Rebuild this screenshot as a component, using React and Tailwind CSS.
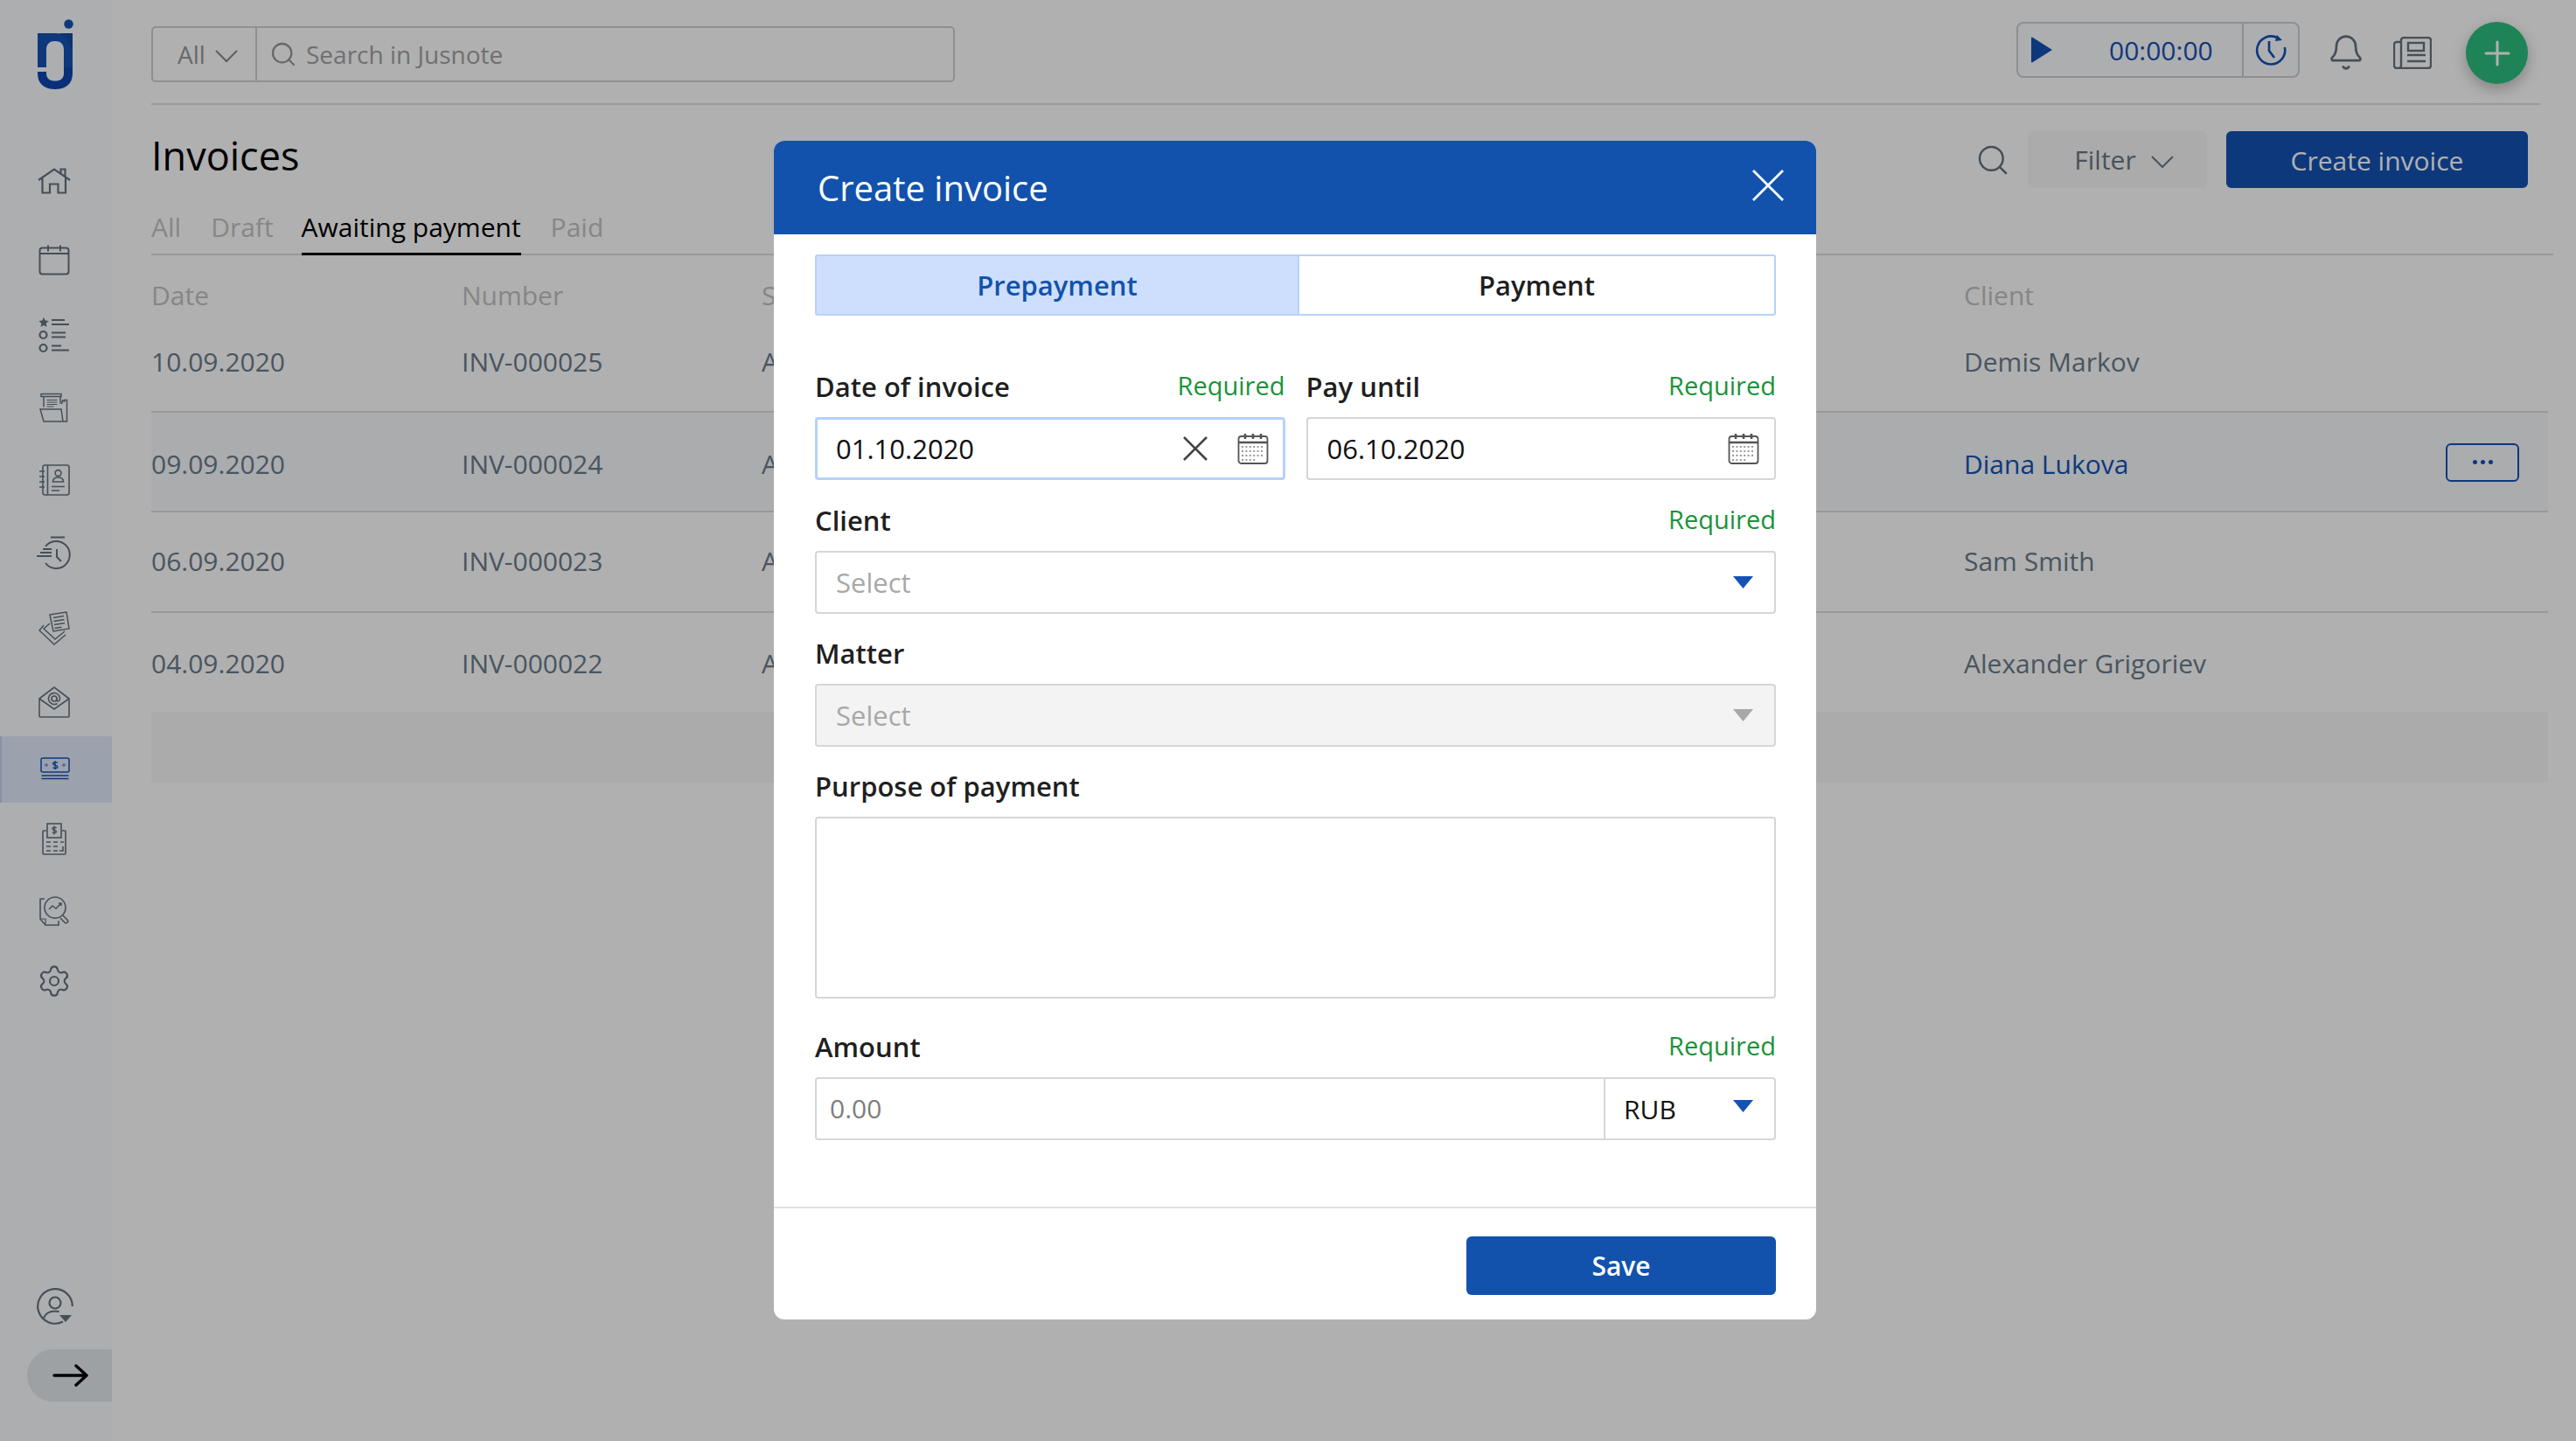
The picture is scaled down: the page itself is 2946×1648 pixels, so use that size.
import React from 'react';
import { Bell, Search, Settings } from 'lucide-react';

const line = '#66737f';

const Home = () => (
  <svg width="38" height="30" viewBox="0 0 38 30" fill="none" stroke={line} strokeWidth="2.2">
    <path d="M1 14 19 1.5 37 14M5.5 11v17.5H14V18.5h9.5v10H32V11M26.5 6.500V1.500h5v9" />
  </svg>
);
const CalendarNav = () => (
  <svg width="36" height="36" viewBox="0 0 36 36" fill="none" stroke={line} strokeWidth="2">
    <rect x="1.500" y="4.500" width="33" height="30" rx="3" />
    <path d="M1.500 11h33M11 1.500v7M25 1.500v7" />
  </svg>
);
const Tasks = () => (
  <svg width="36" height="42" viewBox="0 0 36 42" fill="none" stroke={line} strokeWidth="2.2">
    <path fill={line} stroke="none" d="m6 1 1.700 3.600 4 .5-3 2.700.8 4L6 10l-3.500 1.800.8-4-3-2.700 4-.5z" />
    <path d="M15 4h15M15 9h20" />
    <circle cx="5.500" cy="21" r="4" />
    <path d="M15 18.500h16M15 23.500h16" />
    <circle cx="5.500" cy="36" r="4" />
    <path d="M15 33.500h11M15 38.500h20" />
  </svg>
);
const Docs = () => (
  <svg width="34" height="34" viewBox="0 0 34 34" fill="none" stroke={line} strokeWidth="1.500">
    <path d="M2 1.500h23v3H2zM5 4.500v12M24 4.500v8M25.500 13l1-4 2 1V8.500h3V33H5L1 19h24l2 14" />
    <path d="M8.500 8.500h12M8.500 11h12M8.500 13.500h12M8.500 16h8" strokeWidth="1" />
  </svg>
);
const Contacts = () => (
  <svg width="36" height="36" viewBox="0 0 36 36" fill="none" stroke={line} strokeWidth="1.600">
    <rect x="5" y="1" width="30" height="34" rx="2.500" />
    <path d="M10.500 1v34M1 8h6M1 14h6M1 20h6M1 26h6" />
    <circle cx="22.500" cy="10" r="3.400" />
    <path d="M16.500 20c0-3.500 2.500-5 6-5s6 1.500 6 5zM15 25.500h15M15 30h9" />
  </svg>
);
const TimeFast = () => (
  <svg width="42" height="40" viewBox="0 0 42 40" fill="none" stroke={line} strokeWidth="2">
    <path d="M17 1.500h16M11 12a15.500 15.500 0 1 1 0 19M8 15h10M5 19h13M1 23h17M24 15v9l5 5" />
  </svg>
);
const Notes = () => (
  <svg width="36" height="40" viewBox="0 0 36 40" fill="none" stroke={line} strokeWidth="1.500">
    <path d="M13 4 32 1l3 19-18 3zM17 7.500l12-2M17.500 11.500l12-2M18 15.500l12-2M18.500 19.500l8-1.300" />
    <path d="M13 14 6 20l13 12 11-9M6 16 1 22l17 16 13-11" />
  </svg>
);
const Mail = () => (
  <svg width="36" height="36" viewBox="0 0 36 36" fill="none" stroke={line} strokeWidth="1.600">
    <path d="M1 14 18 1l17 13v20a1 1 0 0 1-1 1H2a1 1 0 0 1-1-1zM1 14l17 12 17-12" />
    <circle cx="18" cy="14" r="3" />
    <path d="M21 14v1.500c0 2.500 3.500 2 3.500-1.500a6.500 6.500 0 1 0-3 5.500" />
  </svg>
);
const Money = () => (
  <svg width="34" height="28" viewBox="0 0 34 28" fill="none" stroke="#1452b4" strokeWidth="1.500">
    <rect x="1" y="1" width="32" height="16" rx="2" />
    <path d="M1.500 21h31M1.500 24.500h31" />
    <path d="M7 7.500 8.500 9 7 10.500 5.500 9zM27 7.500 28.500 9 27 10.500 25.500 9z" strokeWidth="0.9" />
    <path d="M19.800 6.500c-.8-1.200-5.200-1.200-5.200.8 0 2.600 5.200 1.200 5.200 3.600 0 2-4.400 2-5.300.7M17 4.300v9.600" strokeWidth="1.400" />
  </svg>
);
const Receipt = () => (
  <svg width="28" height="37" viewBox="0 0 28 37" fill="none" stroke={line} strokeWidth="1.600">
    <path d="M5 9H2a1 1 0 0 0-1 1v25a1 1 0 0 0 1 1h24a1 1 0 0 0 1-1V10a1 1 0 0 0-1-1h-3" />
    <rect x="6" y="1" width="16" height="16" />
    <path d="M5 22h5M13 22h5M21 22h4M5 27h5M13 27h5M5 32h5M13 32h5M24 27v5h-4" />
    <path d="M16.500 6c-.8-1-4.500-1-4.500.8 0 2.200 4.500 1.200 4.500 3.200 0 1.800-4 1.800-4.500.7M14 3.500v10" strokeWidth="1.500" />
  </svg>
);
const Analysis = () => (
  <svg width="35" height="35" viewBox="0 0 35 35" fill="none" stroke={line} strokeWidth="1.600">
    <path d="M6 4H1v23l6 7h15v-5" />
    <path d="M1 27h6v7" strokeWidth="1.200" />
    <circle cx="18" cy="14" r="12" />
    <path d="m11 16 4-4 4 3 6-6M22 9h3v3" strokeWidth="1.500" />
    <path d="m27 23 5 5c2 2-1 5-3 3l-5-5" />
  </svg>
);
const Profile = () => (
  <svg width="42" height="42" viewBox="0 0 42 42" fill="none" stroke={line} strokeWidth="2.200">
    <path d="M30 38.500A19.800 19.800 0 1 1 40.800 21" />
    <circle cx="21" cy="17" r="6.500" />
    <path d="M8 34.500c2-5.500 7-8 13-8 1.500 0 3 .2 4.500.6" />
    <path fill={line} stroke="none" d="M26 31h14l-7 8z" />
  </svg>
);

const Logo = () => (
  <svg width="44" height="82" viewBox="41 22 44 82">
    <circle cx="78.500" cy="27.500" r="5.200" fill="#1452b4" />
    <path fill="#1452b4" d="M43 38h20c14 0 20 6 20 18v21H73V57c0-7-4-10-10-10s-10 3-10 10v20H43z" />
    <path fill="#124aa6" d="M68 38h15v22c-2-8-6-17-15-22z" />
    <path fill="#0f45b0" d="M43 82h10v2c0 6 4 8.500 10 8.500s10-2.500 10-8.500v-7h10v7c0 12-8 18-20 18s-20-6-20-18z" />
  </svg>
);

const Chevron = ({ color }) => (
  <svg width="26" height="15" viewBox="0 0 26 15" fill="none" stroke={color} strokeWidth="2"><path d="M1 1l12 12L25 1" /></svg>
);

// top margin gives each icon the spacing it has in the rail
const railItems = [
  { icon: <Home />, cls: 'mt-[0px]' },
  { icon: <CalendarNav />, cls: 'mt-[14px]' },
  { icon: <Tasks />, cls: 'mt-[10px]' },
  { icon: <Docs />, cls: 'mt-[7px]' },
  { icon: <Contacts />, cls: 'mt-[7px]' },
  { icon: <TimeFast />, cls: 'mt-[8px]' },
  { icon: <Notes />, cls: 'mt-[10px]' },
  { icon: <Mail />, cls: 'mt-[8px]' },
  { icon: <Money />, cls: 'mt-[1px] bg-[#e1e9fb] border-l-2 border-l-[#c3d3ee]' },
  { icon: <Receipt />, cls: 'mt-[3px]' },
  { icon: <Analysis />, cls: 'mt-[6px]' },
  { icon: <Settings size={40} strokeWidth={1.300} color={line} />, cls: 'mt-[5px]' },
];

const Sidebar = () => (
  <aside className="w-[128px] shrink-0 bg-[#fbfcff] flex flex-col">
    <div className="h-[169px] pt-[22px] pl-[41px]">
      <Logo />
    </div>
    {railItems.map((item, i) => (
      <div key={i} className={`h-[76px] flex items-center justify-center pr-[4px] ${item.cls}`}>
        {item.icon}
      </div>
    ))}
    <div className="mt-auto flex justify-center pr-[2px]">
      <Profile />
    </div>
    <div className="mt-[28px] mb-[45px] ml-[31px] h-[60px] rounded-l-full bg-[#e5e9ec] flex items-center pl-[29px]">
      <svg width="42" height="26" viewBox="0 0 42 26" fill="none" stroke="#000" strokeWidth="3.400" strokeLinecap="round" strokeLinejoin="round">
        <path d="M2 13h37M27 2l12 11-12 11" />
      </svg>
    </div>
  </aside>
);

const TopBar = () => (
  <header className="h-[120px] mr-[41px] border-b-2 border-[#dedede] flex items-start pr-[14px] pt-[25px]">
    <div className="mt-[5px] w-[919px] h-[64px] border-2 border-[#cfcfcf] rounded-[5px] flex items-center">
      <div className="w-[119px] h-full border-r-2 border-[#cfcfcf] flex items-center pl-[28px] text-[#999] text-[28px]">
        All
        <span className="ml-[11px] mt-[4px]"><Chevron color="#8a8a8a" /></span>
      </div>
      <Search size={32} strokeWidth={1.700} color="#999" className="ml-[14px]" />
      <span className="ml-[10px] text-[28px] text-[#a2a2a2]">Search in Jusnote</span>
    </div>
    <div className="ml-auto flex items-start">
      <div className="w-[324px] h-[64px] border-2 border-[#cfcfcf] rounded-[8px] bg-[#fbfcff] flex items-center">
        <svg width="26" height="30" viewBox="0 0 26 30" className="ml-[14px]"><path d="M1 1.500a1 1 0 0 1 1.500-.8L25 15 2.500 29.300A1 1 0 0 1 1 28.500z" fill="#1452b4" /></svg>
        <span className="ml-[64px] w-[152px] text-[30px] text-[#1452b4]">00:00:00</span>
        <div className="h-full w-[64px] border-l-2 border-[#cfcfcf] flex items-center justify-center">
          <svg width="36" height="36" viewBox="0 0 36 36" fill="none" stroke="#1452b4" strokeWidth="2.600">
            <path d="M26 4.500A16 16 0 1 0 33.800 15M16 8v11l6 8" />
            <path d="m25 1 6 6-8 1z" fill="#1452b4" stroke="none" />
          </svg>
        </div>
      </div>
      <Bell size={44} strokeWidth={1.500} color={line} className="ml-[31px] mt-[13px]" />
      <svg width="44" height="37" viewBox="0 0 44 37" fill="none" stroke={line} strokeWidth="2.400" className="ml-[32px] mt-[17px]">
        <path d="M9 6h-5a3 3 0 0 0-3 3v24a3 3 0 0 0 3 3h36a3 3 0 0 0 3-3V4a3 3 0 0 0-3-3H12a3 3 0 0 0-3 3v29a3 3 0 0 1-3 3" />
        <rect x="17" y="7" width="18" height="9" />
        <path d="M16 21h21M16 28h21" />
      </svg>
      <div className="ml-[39px] w-[71px] h-[71px] rounded-full bg-[#2dbe80] shadow-[0_6px_16px_rgba(0,0,0,0.25)] flex items-center justify-center">
        <svg width="30" height="30" viewBox="0 0 30 30" stroke="#fff" strokeWidth="3" strokeLinecap="round"><path d="M15 2v26M2 15h26" /></svg>
      </div>
    </div>
  </header>
);

const rows = [
  { date: '10.09.2020', num: 'INV-000025', client: 'Demis Markov', cls: 'h-[114px] pb-[2px]' },
  { date: '09.09.2020', num: 'INV-000024', client: 'Diana Lukova', cls: 'h-[114px] bg-[#f6f9fc] pt-[5px]', active: true },
  { date: '06.09.2020', num: 'INV-000023', client: 'Sam Smith', cls: 'h-[115px] pb-[2px]' },
  { date: '04.09.2020', num: 'INV-000022', client: 'Alexander Grigoriev', cls: 'h-[113px] pt-[4px] border-b-transparent' },
];

const Invoices = () => (
  <section>
    <div className="mr-[55px] flex items-center pt-[30px]">
      <h1 className="text-[45px] leading-[60px] font-medium text-black -mt-[10px]">Invoices</h1>
      <Search size={40} strokeWidth={1.500} color={line} className="ml-auto" />
      <button className="ml-[20px] pl-[15px] w-[205px] h-[65px] rounded-[6px] bg-[#f8f8f8] flex items-center justify-center text-[30px] text-[#6b7884]">
        Filter
        <span className="ml-[17px] mt-[5px]"><Chevron color="#6b7884" /></span>
      </button>
      <button className="ml-[22px] pt-[2px] w-[345px] h-[65px] rounded-[6px] bg-[#1452b4] text-[30px] text-white">Create invoice</button>
    </div>
    <div className="mr-[26px] h-[77px] border-b-2 border-[#dedede] flex items-end gap-[34px] text-[30px] text-[#c4c4c4]">
      <span className="h-[53px]">All</span>
      <span className="h-[53px]">Draft</span>
      <span className="h-[55px] -ml-[2px] -mb-[2px] border-b-[3px] border-black text-black">Awaiting payment</span>
      <span className="h-[53px]">Paid</span>
    </div>
    <div className="mr-[32px]">
      <div className="h-[66px] flex items-center pt-[25px] text-[30px] text-[#c2c2c2]">
        <span className="w-[355px]">Date</span>
        <span className="w-[343px]">Number</span>
        <span className="w-[1375px]">S</span>
        <span>Client</span>
      </div>
      {rows.map((r) => (
        <div key={r.num} className={`flex items-center border-b-2 border-[#dedede] text-[30px] text-[#6b7b8b] ${r.cls}`}>
          <span className="w-[355px]">{r.date}</span>
          <span className="w-[343px]">{r.num}</span>
          <span className="w-[1375px]">A</span>
          <span className={r.active ? 'text-[#1452b4]' : ''}>{r.client}</span>
          {r.active && (
            <span className="ml-auto mr-[33px] -mt-[4px] w-[84px] h-[44px] rounded-[6px] border-2 border-[#1452b4] flex items-center justify-center gap-[4px]">
              <i className="w-[5px] h-[5px] rounded-full bg-[#1452b4]" />
              <i className="w-[5px] h-[5px] rounded-full bg-[#1452b4]" />
              <i className="w-[5px] h-[5px] rounded-full bg-[#1452b4]" />
            </span>
          )}
        </div>
      ))}
      <div className="h-[81px] bg-[#f8f8f8]" />
    </div>
  </section>
);

const CalendarSmall = () => (
  <svg width="36" height="36" viewBox="0 0 36 36" fill="none" stroke="#555" strokeWidth="1.800">
    <rect x="1.500" y="4" width="33" height="31" rx="3" />
    <path d="M1.500 11h33" strokeWidth="2.600" />
    <path d="M9 1v6M18 1v6M27 1v6" strokeWidth="2.600" />
    <path d="M5 16h26M5 21h26M5 26h26M5 31h16" stroke="#999" strokeWidth="1.800" strokeDasharray="2 2.400" />
  </svg>
);

const Caret = ({ color = '#1452b4' }) => (
  <svg width="23" height="14" viewBox="0 0 23 14"><path d="M0 0h23L11.500 14z" fill={color} /></svg>
);

const Label = ({ text, required }) => (
  <div className="h-[40px] mb-[14px] flex items-center justify-between">
    <span className="text-[31px] font-semibold text-[#1f1f1f] -mt-[2px]">{text}</span>
    {required && <span className="text-[29px] text-[#1a9338] -mt-[5px]">Required</span>}
  </div>
);

const Modal = () => (
  <div className="absolute left-[885px] top-[161px] w-[1192px] rounded-[12px] bg-white overflow-hidden">
    <div className="h-[107px] bg-[#1252ac] flex items-center justify-between pl-[50px] pr-[36px]">
      <h2 className="text-[40px] font-medium text-white">Create invoice</h2>
      <svg width="38" height="38" viewBox="0 0 38 38" stroke="#fff" strokeWidth="2.800" className="-mt-[6px]"><path d="M2 2l34 34M36 2 2 36" /></svg>
    </div>
    <div className="pl-[47px] pr-[46px]">
      <div className="mt-[23px] h-[70px] flex border-2 border-[#b6d1fb] rounded-[3px] text-[31px] font-semibold">
        <div className="w-[550px] bg-[#cddffc] flex items-center justify-center text-[#1252ac]">Prepayment</div>
        <div className="flex-1 border-l-2 border-[#b6d1fb] flex items-center justify-center text-[#1f1f1f]">Payment</div>
      </div>

      <div className="mt-[62px] grid grid-cols-2 gap-[24px]">
        <div>
          <Label text="Date of invoice" required />
          <div className="h-[72px] border-[3px] border-[#b6d1fb] rounded-[4px] flex items-center pl-[21px] pr-[16px] text-[31px] text-[#111]">
            01.10.2020
            <svg width="30" height="28" viewBox="0 0 30 28" stroke="#444" strokeWidth="2.600" className="ml-auto mr-[33px]"><path d="M2 1l26 26M28 1 2 27" /></svg>
            <CalendarSmall />
          </div>
        </div>
        <div>
          <Label text="Pay until" required />
          <div className="h-[72px] border-2 border-[#d6d6d6] rounded-[4px] flex items-center pl-[22px] pr-[17px] text-[31px] text-[#111]">
            06.10.2020
            <span className="ml-auto"><CalendarSmall /></span>
          </div>
        </div>
      </div>

      <div className="mt-[27px]">
        <Label text="Client" required />
        <div className="h-[72px] border-2 border-[#d6d6d6] rounded-[4px] flex items-center justify-between pl-[22px] pr-[24px] text-[31px] text-[#a8a8a8]">
          Select
          <Caret />
        </div>
      </div>

      <div className="mt-[26px]">
        <Label text="Matter" />
        <div className="h-[72px] border-2 border-[#d6d6d6] bg-[#f3f3f3] rounded-[4px] flex items-center justify-between pl-[22px] pr-[24px] text-[31px] text-[#a8a8a8]">
          Select
          <Caret color="#a8a8a8" />
        </div>
      </div>

      <div className="mt-[26px]">
        <Label text="Purpose of payment" />
        <div className="h-[208px] border-2 border-[#d6d6d6] rounded-[4px]" />
      </div>

      <div className="mt-[36px]">
        <Label text="Amount" required />
        <div className="h-[72px] border-2 border-[#d6d6d6] rounded-[4px] flex items-center text-[30px]">
          <div className="w-[900px] h-full flex items-center pl-[15px] text-[#7d7d7d] -mt-[2px]">0.00</div>
          <div className="flex-1 h-full border-l-2 border-[#d6d6d6] flex items-center justify-between pl-[21px] pr-[24px] text-[#111]">
            RUB
            <span className="-mt-[6px]"><Caret /></span>
          </div>
        </div>
      </div>
    </div>
    <div className="mt-[76px] border-t-2 border-[#e0e0e0] pt-[32px] pb-[28px] pr-[46px] flex justify-end">
      <button className="w-[354px] h-[67px] rounded-[6px] bg-[#1252ac] text-[30px] font-semibold text-white">Save</button>
    </div>
  </div>
);

export default function App() {
  return (
    <div className="relative w-[2946px] h-[1648px] overflow-hidden flex bg-white font-['Open_Sans',sans-serif]">
      <Sidebar />
      <main className="flex-1 pl-[45px]">
        <TopBar />
        <Invoices />
      </main>
      <div className="absolute inset-0 bg-black/[0.31]" />
      <Modal />
    </div>
  );
}
